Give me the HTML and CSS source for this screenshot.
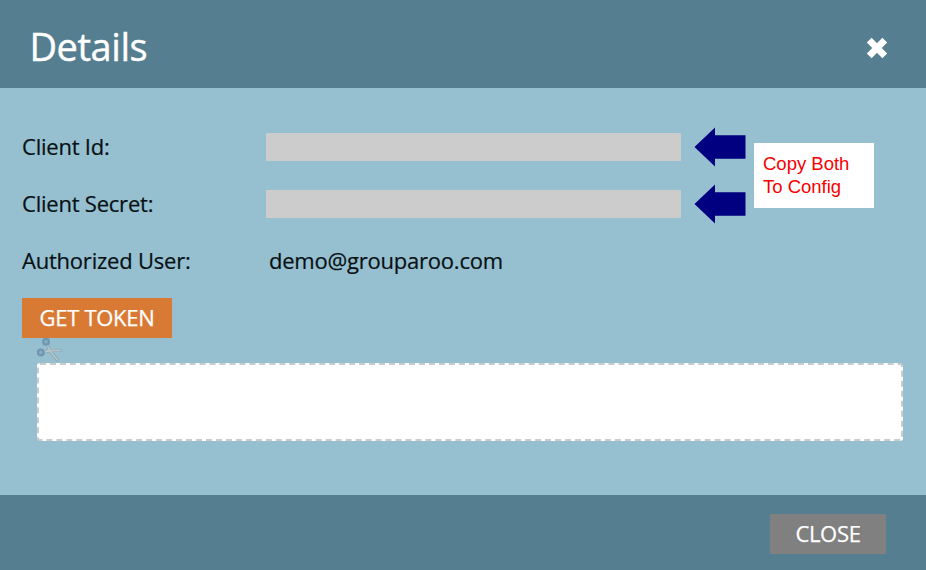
FILE: index.html
```html
<!DOCTYPE html>
<html lang="en">
<head>
<meta charset="utf-8">
<title>Details</title>
<link rel="stylesheet" href="styles.css">
</head>
<body>
<div class="dialog">
  <header class="header">
    <h1 class="title">Details</h1>
    <svg class="dismiss" width="24" height="24" viewBox="0 0 24 24"><path d="M4.200 4.200 19.800 19.800M19.800 4.200 4.200 19.800"/></svg>
  </header>
  <main class="body">
    <div class="row">
      <span class="label">Client Id:</span>
      <span class="redacted"></span>
      <svg class="arrow" width="52" height="40" viewBox="0 0 52 40"><path d="M.5 20 21 .5V8.300H51.500V31.700H21V39.500Z"/></svg>
    </div>
    <div class="row">
      <span class="label">Client Secret:</span>
      <span class="redacted"></span>
      <svg class="arrow" width="52" height="40" viewBox="0 0 52 40"><path d="M.5 20 21 .5V8.300H51.500V31.700H21V39.500Z"/></svg>
    </div>
    <div class="row">
      <span class="label">Authorized User:</span>
      <span class="value">demo@grouparoo.com</span>
    </div>
    <button class="button token">GET TOKEN</button>
    <svg class="scissors" width="26" height="25" viewBox="0 0 26 25">
      <path class="edge" d="M10.500 7.500 13 13 20.500 22M7 14 13.500 12.500 23.500 12.500"/>
      <path class="blade" d="M10.500 7.500 13 13 20.500 22M7 14 13.500 12.500 23.500 12.500"/>
      <circle class="handle" cx="9" cy="3.700" r="2.900"/>
      <circle class="handle" cx="3.700" cy="14.500" r="2.900"/>
    </svg>
    <div class="coupon"></div>
    <div class="note">Copy Both<br>To Config</div>
  </main>
  <footer class="footer"><button class="button close">CLOSE</button></footer>
</div>
</body>
</html>
```
FILE: styles.css
```css
* { box-sizing: border-box; }
body { margin: 0; font: 22px "Open Sans", sans-serif; letter-spacing: -.22px; color: #071114; }
.dialog { height: 570px; display: flex; flex-direction: column; background: #96bfcf; overflow: hidden; }
.header { height: 88px; flex: none; padding: 0 37.5px 0 29.5px; display: flex; align-items: center; justify-content: space-between; background: #557e90; }
.title { margin: 4px 0 0; font-size: 38px; font-weight: 400; line-height: 52px; letter-spacing: -.45px; color: #fff; -webkit-text-stroke: .4px #fff; }
.dismiss { margin-top: 8px; fill: none; stroke: #fff; stroke-width: 6.800; }
.body { position: relative; flex: 1; padding: 31px 23px 0 22px; }
.row { height: 57px; display: flex; align-items: center; white-space: nowrap; }
.label, .value { padding-bottom: 4px; -webkit-text-stroke: .2px #071114; }
.label { width: 243.5px; flex: none; }
.value { padding-left: 3.500px; }
.redacted { width: 415.5px; height: 28px; margin-bottom: 1px; background: #ccc; }
.arrow { margin-left: 13px; margin-bottom: .5px; fill: #000080; }
.button { display: block; height: 40px; padding: 0 0 1px; border: 0; font: 22px/39px "Open Sans", sans-serif; letter-spacing: -.3px; color: #fff; -webkit-text-stroke: .25px #fff; }
.token { width: 150px; margin-top: 8px; background: #d97a34; }
.scissors { display: block; margin-left: 15px; opacity: .85; }
.edge, .blade { fill: none; stroke-linecap: round; }
.edge { stroke: #8299a4; stroke-width: 3; }
.blade { stroke: #b9c8cf; stroke-width: 1.800; }
.handle { fill: #88abc0; stroke: #6991ae; stroke-width: 2.300; }
.coupon { height: 78px; margin-left: 15px; background: #fff; border: 2px dashed #c9cccd; border-radius: 3px; }
.note { position: absolute; left: 754px; top: 55px; width: 120px; height: 65px; padding: 10px 9px; background: #fff; color: #f80000; letter-spacing: 0; font: 18.5px/22.5px "Liberation Sans", sans-serif; }
.footer { height: 75px; flex: none; padding: 0 40px 0 0; display: flex; align-items: center; justify-content: flex-end; background: #557e90; }
.close { width: 116px; margin-top: 2px; background: #808080; }
```
